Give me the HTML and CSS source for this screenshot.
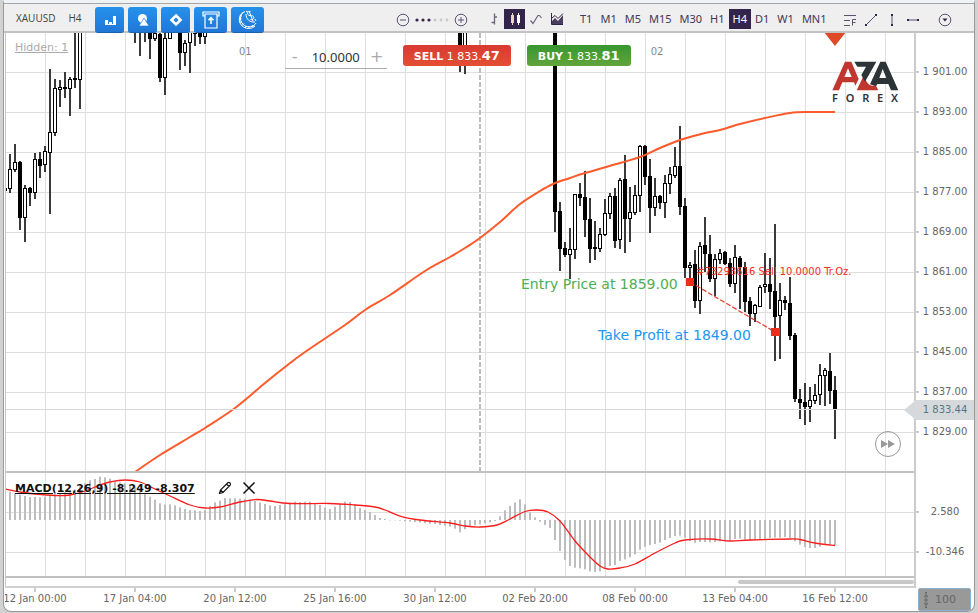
FILE: index.html
```html
<!DOCTYPE html>
<html lang="en">
<head>
<meta charset="utf-8">
<title>XAUUSD H4</title>
<link rel="stylesheet" href="styles.css">
</head>
<body>
<div class="terminal">
  <header class="toolbar">
    <div class="symbol"><span>XAUUSD</span><span>H4</span></div>
    <nav class="tools">
      <button class="tool" aria-label="Indicators"><svg width="12" height="12" viewBox="0 0 12 12"><path fill="#fff" d="M1 6h3v5H1zM5 8h3v3H5zM9 2h3v9H9zM1 10h11v1H1z"/></svg></button>
      <button class="tool" aria-label="Objects"><svg width="14" height="14" viewBox="0 0 14 14"><circle cx="6.500" cy="5.500" r="4.500" fill="#fff"/><path d="M8 5 13 13H3z" fill="#fff" stroke="#2482dd" stroke-width=".7"/></svg></button>
      <button class="tool" aria-label="Shapes"><svg width="14" height="14" viewBox="0 0 14 14"><path d="M7 2.500 11.500 7 7 11.500 2.500 7z" fill="none" stroke="#fff" stroke-width="2.600"/></svg></button>
      <button class="tool wide" aria-label="Deposit"><svg width="18" height="18" viewBox="0 0 18 18" fill="none" stroke="#fff" stroke-width="1.200"><path d="M3 5H1V1h16v4h-2M3 3h12v14H3z"/><path stroke-width="1.600" d="M9 13V7M6.500 9.200 9 6.700l2.500 2.500"/></svg></button>
      <button class="tool wide" aria-label="Funds"><svg width="20" height="20" viewBox="0 0 20 20" fill="none" stroke="#fff"><path d="M7 1.500C1 4 1 12 6.500 15.500c4 2.500 9.500 1.500 11.500-2.500"/><path d="M5 2.500C-.5 6 .5 14 5.500 17c4 2.500 9 1.500 11.500-1M2 5.500l2 .7M1 9l2.500-.2M1.500 12.500l2.500-1M4 15.500l2-2M7 18l1-2M11 18.500V16M15 17l-.8-2"/><path d="M8 4c0 5 3.500 8.500 9 8M12.500 1.500c-3-.5-4 2-2 3.500s4 0 5 1.500-.5 4-3 3M11 1l4 10M8 1.500l2 .5M17 9l1 2"/></svg></button>
    </nav>
    <div class="zoomer">
      <button class="icon" aria-label="Zoom out"><svg width="14" height="14" viewBox="0 0 14 14" fill="none" stroke="#5d5270"><circle cx="7" cy="7" r="5.800"/><path d="M4 7h6"/></svg></button>
      <svg class="dots" width="34" height="4" viewBox="0 0 34 4"><g fill="#32244a"><circle cx="2" cy="2" r="1.600"/><circle cx="8" cy="2" r="1.600"/><circle cx="14" cy="2" r="1.600"/></g><g fill="#c8c8cc"><circle cx="20" cy="2" r="1.400"/><circle cx="26" cy="2" r="1.400"/><circle cx="32" cy="2" r="1.400"/></g></svg>
      <button class="icon" aria-label="Zoom in"><svg width="14" height="14" viewBox="0 0 14 14" fill="none" stroke="#5d5270"><circle cx="7" cy="7" r="5.800"/><path d="M4 7h6M7 4v6"/></svg></button>
    </div>
    <div class="styles">
      <button class="style" aria-label="Bars"><svg width="12" height="14" viewBox="0 0 12 14" fill="none" stroke="#6d637d" stroke-width="1.300"><path d="M6.500 1.500v11M3.500 10.500h3M6.500 5H9"/></svg></button>
      <button class="style active" aria-label="Candles"><svg width="12" height="14" viewBox="0 0 12 14" fill="#fff"><path fill="#e9d3c4" d="M2 3h3v8H2zM3 1h1v12H3z"/><path d="M8 3h3v8H8zM9 1h1v12H9z"/></svg></button>
      <button class="style" aria-label="Line"><svg width="12" height="12" viewBox="0 0 12 12" fill="none" stroke="#6d637d" stroke-width="1.200"><path d="M.5 7.500 3 10.500 8 2.500h1.500L11.500 5"/></svg></button>
      <button class="style" aria-label="Area"><svg width="14" height="14" viewBox="0 0 14 14"><path d="M1.500 1v11.500H13" fill="none" stroke="#32244a"/><path d="M2 12V9l3-3 3 3 5-6v9z" fill="#4a3f60"/><path d="m2 6 3-2.500 3 3L13 1.500" fill="none" stroke="#32244a"/></svg></button>
    </div>
    <div class="periods">
      <button>T1</button><button>M1</button><button>M5</button><button>M15</button><button>M30</button><button>H1</button><button class="active">H4</button><button>D1</button><button>W1</button><button>MN1</button>
    </div>
    <div class="drawing">
      <button class="icon" aria-label="Fibonacci"><svg width="14" height="14" viewBox="0 0 14 14" fill="none" stroke="#5d5270"><path d="M1 2.500h12M1 7.500h6M1 12.500h6M9.500 12.500v-6H13M9.500 9.500h3"/></svg></button>
      <button class="icon" aria-label="Trend line"><svg width="14" height="14" viewBox="0 0 14 14"><path d="m2 12 10-10" stroke="#5d5270"/><path fill="#32244a" d="M1 11h2v2H1zM11 1h2v2h-2z"/></svg></button>
      <button class="icon" aria-label="Vertical line"><svg width="14" height="14" viewBox="0 0 14 14"><path d="M7 2v10" stroke="#5d5270"/><path fill="#32244a" d="M6 1h2v2H6zM6 11h2v2H6z"/></svg></button>
      <button class="icon" aria-label="Horizontal line"><svg width="14" height="14" viewBox="0 0 14 14"><path d="M2 7h10" stroke="#5d5270"/><path fill="#32244a" d="M1 6h2v2H1zM11 6h2v2h-2z"/></svg></button>
    </div>
    <button class="icon more" aria-label="More"><svg width="14" height="14" viewBox="0 0 14 14"><circle cx="7" cy="7" r="5.800" fill="none" stroke="#5d5270"/><path d="M4.500 5.500h5L7 8.500z" fill="#32244a"/></svg></button>
  </header>

  <main class="workspace">
    <div class="panes">
      <section class="price-pane">
        <svg class="plot" id="price" role="img" aria-label="XAUUSD price chart"></svg>
        <a class="hidden-link" href="#">Hidden: 1</a>
        <div class="trade">
          <span class="day">01</span>
          <div class="lot">
            <button aria-label="Less">-</button>
            <input aria-label="Volume" value="10.0000">
            <button aria-label="More volume">+</button>
          </div>
          <button class="order sell"><b>SELL</b> 1 833.<strong>47</strong></button>
          <button class="order buy"><b>BUY</b> 1 833.<strong>81</strong></button>
          <span class="day">02</span>
        </div>
        <div class="brand">
          <svg width="68" height="30" viewBox="0 0 204 90">
            <g fill="#c0372f"><path fill-rule="evenodd" d="M1 88 39 2H58L80 54 70 74 66 64H31L21 88zM37 48H59L48 22z"/><path d="M94 46 104 62Q112 74 122 74H132L139 88H74z"/></g>
            <g fill="#2d3437"><path d="M67 2H133L99 62 88 42 102 17H76z"/><path fill-rule="evenodd" d="M114 70 145 2H161L199 88H177L169 69H136L132 76zM142 51H163L152 24z"/></g>
          </svg>
          <div class="brand-name"><span>F</span><span>O</span><span>R</span><span>E</span><span>X</span></div>
        </div>
        <button class="forward" aria-label="Go to latest"><svg width="14" height="8" viewBox="0 0 14 8"><path fill="#999" d="M0 0 7 4 0 8zM7 0l7 4-7 4z"/></svg></button>
      </section>
      <section class="macd-pane">
        <svg class="plot" id="macd" role="img" aria-label="MACD indicator"></svg>
        <div class="macd-head">
          <a href="#">MACD(12,26,9) -8.249 -8.307</a>
          <button class="icon" aria-label="Edit"><svg width="14" height="14" viewBox="0 0 14 14" fill="#fff" stroke="#111" stroke-width="1.200"><path d="M1.500 12.500 2.500 9 9.800 1.800Q11 1 12 2t.2 2.200L5 11.500zM8.500 3 11 5.500M2.500 9 5 11.500"/></svg></button>
          <button class="icon" aria-label="Remove"><svg width="14" height="14" viewBox="0 0 14 14" stroke="#111" stroke-width="1.500"><path d="m1.500 1.500 11 11M12.500 1.500l-11 11"/></svg></button>
        </div>
      </section>
      <div class="scroll"><div class="thumb"></div></div>
    </div>

    <aside class="price-axis">
      <ol class="price-labels">
        <li>1 901.00</li><li>1 893.00</li><li>1 885.00</li><li>1 877.00</li><li>1 869.00</li><li>1 861.00</li><li>1 853.00</li><li>1 845.00</li><li>1 837.00</li><li>1 829.00</li>
      </ol>
      <div class="current">1 833.44</div>
      <ol class="macd-labels"><li>2.580</li><li>-10.346</li></ol>
    </aside>

    <ol class="time-axis">
      <li>12 Jan 00:00</li><li>17 Jan 04:00</li><li>20 Jan 12:00</li><li>25 Jan 16:00</li><li>30 Jan 12:00</li><li>02 Feb 20:00</li><li>08 Feb 00:00</li><li>13 Feb 04:00</li><li>16 Feb 12:00</li>
    </ol>
    <button class="scale"><svg width="8" height="16" viewBox="0 0 8 16" fill="none" stroke="#666"><path d="M4 3v10M2 5l2-2.500L6 5M2 11l2 2.500L6 11M2 8h4"/><path d="M4 0v1.500M4 14.500V16" stroke-width="2"/></svg>100</button>
  </main>
</div>
<script src="chart.js"></script>
</body>
</html>
```
FILE: styles.css
```css
* { box-sizing: border-box; }

body {
  margin: 0;
  height: 100vh;
  display: flex;
  background: #d2d2d2;
  font-family: "DejaVu Sans", Verdana, sans-serif;
  font-size: 10px;
  color: #666;
}

button {
  margin: 0;
  padding: 0;
  border: 0;
  background: none;
  font: inherit;
  color: inherit;
}

svg { display: block; flex: none; }
ol { margin: 0; padding: 0; list-style: none; }

.terminal {
  flex: 1;
  display: flex;
  flex-direction: column;
  min-height: 560px;
  margin: 0 3px 1px;
  border: 1px solid #999;
  border-top: 3px solid #eff3f6;
  border-radius: 0 0 8px 8px;
  background: #fff;
  overflow: hidden;
}

/* Toolbar */
.toolbar {
  flex: none;
  display: flex;
  align-items: center;
  height: 30px;
  padding: 0 22px 0 12px;
  border-top: 1px solid #a4a8ac;
  border-bottom: 2px solid #c3c3c3;
  background: #efefef;
  font-family: "Noto Sans", sans-serif;
}

.symbol {
  display: flex;
  gap: 13px;
  width: 79px;
  font-family: "Open Sans", sans-serif;
  color: #444;
}

.tools { display: flex; gap: 4px; align-self: flex-start; padding-top: 3px; }

.tool {
  display: flex;
  align-items: center;
  justify-content: center;
  width: 29px;
  height: 26px;
  border-bottom: 1px solid #1c62b0;
  border-radius: 3px;
  background: linear-gradient(#2592ec, #2077d6);
}
.tool.wide { width: 33px; }

.icon { display: flex; }

.zoomer { display: flex; align-items: center; gap: 5px; margin-left: 132px; padding-top: 4px; }
.styles { display: flex; margin-left: 15px; padding-top: 2px; }

.style {
  display: flex;
  align-items: center;
  justify-content: center;
  width: 21px;
  height: 20px;
}
.active { background: #32244a; color: #fff; }

.periods { display: flex; margin-left: 9px; padding-top: 2px; font-size: 11px; color: #43385a; }
.periods button { height: 20px; padding: 0 4px; }
.periods .active { color: #fff; }

.drawing { display: flex; gap: 7px; margin-left: auto; padding-top: 4px; }
.more { margin-left: 18px; padding-top: 4px; }

/* Chart area */
.workspace {
  flex: 1;
  display: grid;
  grid-template-columns: minmax(0, 1fr) 60px;
  grid-template-rows: minmax(0, 1fr) 23px;
  margin-left: 1px;
}

.panes {
  display: flex;
  flex-direction: column;
  border-left: 1px solid #c8c8c8;
  border-bottom: 2px solid #d0d0d0;
}

.price-pane { position: relative; flex: 1; overflow: hidden; }
.macd-pane {
  position: relative;
  flex: none;
  height: 107px;
  border-top: 2px solid #c0c0c0;
  border-bottom: 2px solid #c0c0c0;
}
.plot { position: absolute; width: 100%; height: 100%; }

.hidden-link {
  position: absolute;
  top: 8px;
  left: 9px;
  font-size: 11px;
  color: #aaa;
}

.trade {
  position: absolute;
  top: 12px;
  left: 233px;
  display: flex;
  align-items: flex-start;
}
.day { line-height: 14px; color: #888; }

.lot {
  display: flex;
  align-items: center;
  width: 102px;
  height: 24px;
  margin: 0 16px 0 33px;
  border-bottom: 1px solid #aaa;
  font-size: 16px;
  color: #aaa;
}
.lot button { width: 20px; line-height: 20px; }
.lot input {
  flex: 1;
  min-width: 0;
  height: 20px;
  padding: 0;
  border: 0;
  background: none;
  font: 13px "Noto Sans", sans-serif;
  text-align: center;
  color: #333;
}

.order {
  height: 21px;
  padding: 0 11px;
  border-radius: 3px;
  font-size: 11px;
  line-height: 21px;
  white-space: nowrap;
  color: #fff;
}
.order strong { font-size: 13px; }
.sell { margin-right: 16px; background: linear-gradient(#d83a31, #e34f33); }
.buy { margin-right: 20px; background: linear-gradient(#37962f, #61a53b); }

.brand {
  position: absolute;
  top: 28px;
  left: 826px;
  width: 68px;
}
.brand-name {
  display: flex;
  justify-content: space-between;
  padding-right: 2px;
  font: 600 11px/14px "Noto Sans", sans-serif;
  color: #2d3437;
}

.forward {
  position: absolute;
  right: 13px;
  bottom: 14px;
  display: flex;
  align-items: center;
  justify-content: center;
  width: 26px;
  height: 26px;
  border: 1px solid #999;
  border-radius: 50%;
}

.macd-head {
  position: absolute;
  top: 8px;
  left: 9px;
  display: flex;
  align-items: center;
}
.macd-head a { font-size: 11px; font-weight: bold; color: #111; }
.macd-head .icon { margin-left: 23px; }
.macd-head .icon + .icon { margin-left: 10px; }

.scroll { flex: none; height: 8px; padding: 2px 0; }
.thumb { width: 176px; height: 4px; margin-left: auto; border-radius: 2px; background: #c8c8c8; }

/* Axes */
.price-axis {
  position: relative;
  display: flex;
  flex-direction: column;
  border-left: 2px solid #ccc;
  text-align: center;
}
.price-labels { flex: 1; padding-top: 19px; }
.price-labels li, .macd-labels li {
  height: 40px;
  line-height: 40px;
  background: linear-gradient(#ccc, #ccc) 0 50% / 3px 2px no-repeat;
}
.macd-labels { height: 96px; }

.current {
  position: absolute;
  top: 367px;
  right: 0;
  left: -12px;
  padding-left: 12px;
  line-height: 20px;
  color: #557785;
  background: #d5d9dc;
  clip-path: polygon(0 50%, 12px 0, 100% 0, 100% 100%, 12px 100%);
}

.time-axis { display: flex; margin-left: -20px; overflow: hidden; clip-path: inset(0 0 0 20px); }
.time-axis li {
  flex: none;
  width: 100px;
  line-height: 22px;
  text-align: center;
  background: linear-gradient(#ccc, #ccc) 50% 0 / 2px 4px no-repeat;
}

.scale {
  display: flex;
  align-items: center;
  gap: 5px;
  height: 23px;
  margin: 0 3px 0 4px;
  padding-left: 3px;
  border: 1px solid #8fb0cc;
  border-radius: 2px;
  background: #999;
  font-size: 11px;
}
```
FILE: chart.js
```js
const NS = "http://www.w3.org/2000/svg";

// Both panes share the terminal's coordinate space; each one shifts it to its own origin.
function openPane(id, dx, dy) {
  const svg = document.getElementById(id);
  const group = document.createElementNS(NS, "g");
  group.setAttribute("transform", `translate(${dx} ${dy})`);
  svg.appendChild(group);
  return group;
}

function add(parent, tag, attrs, text) {
  const el = document.createElementNS(NS, tag);
  for (const key in attrs) el.setAttribute(key, attrs[key]);
  if (text) el.textContent = text;
  parent.appendChild(el);
  return el;
}

const rect = (g, x, y, width, height, fill) => add(g, "rect", { x, y, width, height, fill });

function curve(g, pts, stroke, width) {
  let d = `M${pts[0]}`;
  for (let i = 0; i < pts.length - 1; i++) {
    const p0 = pts[i - 1] || pts[i], p1 = pts[i], p2 = pts[i + 1], p3 = pts[i + 2] || p2;
    d += `C${p1[0] + (p2[0] - p0[0]) / 6},${p1[1] + (p2[1] - p0[1]) / 6} ${p2[0] - (p3[0] - p1[0]) / 6},${p2[1] - (p3[1] - p1[1]) / 6} ${p2}`;
  }
  add(g, "path", { d, fill: "none", stroke, "stroke-width": width });
}

function grid(g, top, bottom, first) {
  for (let x = 45; x < 3000; x += 40) rect(g, x, top, 1, bottom - top, "#dfdfdf");
  for (let y = first; y < bottom; y += 40) rect(g, 0, y, 3000, 1, "#dfdfdf");
}

// x, high, low, body top, body bottom, rising (1) or falling (0)
const candles = [
  [5,185,218,188,191,1],[10,154,193,169,189,1],[15,144,172,162,170,1],[20,161,230,162,218,0],
  [25,185,242,188,218,1],[30,187,206,188,193,0],[35,153,199,159,193,1],[40,152,178,159,166,0],
  [45,146,172,151,165,1],[50,69,214,132,153,1],[55,79,136,88,133,1],[60,80,107,87,90,1],
  [65,72,98,87,89,0],[70,77,116,79,89,1],[75,20,88,78,80,0],[80,20,109,20,80,1],
  [135,20,43,20,22,0],[140,20,56,20,22,0],[145,20,42,20,22,0],[150,20,59,20,39,0],
  [155,20,41,33,39,1],[160,20,82,34,78,0],[165,20,95,38,78,1],[170,20,39,20,39,1],
  [180,20,70,20,53,0],[185,40,66,43,53,1],[190,20,73,20,43,1],[195,20,46,20,34,0],
  [200,20,44,20,37,0],[205,20,44,20,37,1],[460,20,72,20,65,0],[465,20,74,20,65,1],
  [555,20,232,20,212,0],[560,202,271,211,249,0],[565,242,257,248,255,0],[570,228,279,249,255,1],
  [575,194,259,194,250,1],[580,183,206,194,198,0],[585,171,237,197,220,0],[590,198,263,219,249,0],
  [595,221,260,247,249,0],[600,228,252,234,249,1],[605,199,236,213,235,1],[610,193,219,196,214,1],
  [615,188,248,196,241,0],[620,178,249,180,240,1],[625,155,253,179,219,0],[630,187,242,212,219,1],
  [635,185,215,195,213,1],[640,145,212,146,196,1],[645,145,185,146,177,0],[650,159,233,176,208,0],
  [655,178,216,196,208,1],[660,195,209,196,203,0],[665,175,218,183,203,1],[670,167,194,174,184,1],
  [675,147,178,166,176,1],[680,126,215,166,207,0],[685,198,278,206,268,0],[690,262,278,265,268,1],
  [695,250,308,264,301,0],[700,242,314,246,301,1],[705,217,272,245,254,0],[710,235,282,254,279,0],
  [715,254,296,259,279,1],[720,249,264,253,260,1],[725,251,265,252,264,0],[730,258,287,263,284,0],
  [735,245,293,257,284,1],[740,256,309,258,267,0],[745,262,312,267,302,0],[750,297,326,301,314,0],
  [755,304,322,305,314,1],[760,285,307,287,307,1],[765,253,293,284,287,1],[770,258,309,284,292,0],
  [775,224,361,291,317,0],[780,283,359,300,316,1],[785,296,310,300,303,0],[790,277,340,303,336,0],
  [795,333,402,335,399,0],[800,389,419,399,403,0],[805,383,425,402,407,0],[810,387,422,400,407,1],
  [815,384,404,395,401,1],[820,364,405,375,395,1],[825,368,406,370,376,1],[830,353,404,371,391,0],
  [835,376,439,390,410,0]
];

const average = [[135,472],[160,455],[190,437],[205,428],[235,408],[265,383],[285,367],[305,352],
  [345,325],[365,310],[390,295],[425,271],[450,257],[465,248],[480,238],[500,222],[520,204],
  [540,191],[553,184],[570,178],[585,173],[620,163],[640,157],[660,148],[680,140],[705,133],
  [720,130],[740,124],[765,118],[790,113],[810,112],[835,112]];

const price = openPane("price", -6, -33);
grid(price, 0, 2000, 72);
add(price, "path", { d: "M480 33V2000", stroke: "#bdbdbd", "stroke-width": 2, "stroke-dasharray": "5 2" });
for (const [x, high, low, top, bottom, up] of candles) {
  rect(price, x - 1, high, 2, low - high, "#3a3a3a");
  rect(price, x - 2, top, 4, bottom - top, "#000");
  if (up) rect(price, x - 1, top + 1, 2, bottom - top - 2, "#fff");
}
curve(price, average, "#ff5a2b", 2);
rect(price, 0, 409, 3000, 1, "#d5d9dc");
add(price, "path", { d: "M824 32h22l-11 14z", fill: "#de4a28" });
add(price, "path", { d: "M690 282 775 332", stroke: "#e83a28", "stroke-width": 1.2, "stroke-dasharray": "5 2" });
rect(price, 686, 278, 8, 8, "#ee2a18");
rect(price, 771, 328, 9, 8, "#ee2a18");
add(price, "text", { x: 696, y: 275, "font-size": 10, fill: "#f03020" }, "#73298616 Sell 10.0000 Tr.Oz.");
add(price, "text", { x: 521, y: 289, "font-size": 14, fill: "#4caf50" }, "Entry Price at 1859.00");
add(price, "text", { x: 598, y: 340, "font-size": 14, fill: "#2196f3" }, "Take Profit at 1849.00");

// One histogram bar every 5px, as distance above the zero line in thirds of a pixel
const histogram = [85,80,76,72,69,69,68,70,73,77,80,83,87,92,100,110,119,123,130,128,124,118,113,110,
  105,98,90,79,70,61,50,46,47,44,38,33,30,29,27,30,42,53,58,66,65,65,64,63,61,57,52,48,44,42,45,48,
  52,55,54,55,55,51,45,37,33,40,48,55,54,47,36,30,24,15,6,3,-1,-1,-2,-4,-5,-6,-7,-9,-11,-12,-15,-17,
  -20,-26,-37,-28,-20,-16,-13,-10,-7,-3,11,29,42,53,62,47,23,8,-5,-15,-24,-60,-93,-120,-138,-143,
  -145,-148,-154,-156,-154,-144,-138,-135,-123,-118,-112,-103,-89,-80,-75,-72,-68,-60,-54,-48,-47,
  -53,-63,-68,-66,-66,-67,-66,-64,-62,-61,-57,-56,-58,-61,-60,-59,-56,-54,-53,-53,-51,-54,-64,-74,
  -81,-84,-84,-80,-75,-75,-76];

const signal = [[5,489],[20,492],[35,494],[55,495.5],[70,495],[85,491],[100,485],[110,482],[125,480],
  [140,482],[155,489],[170,496],[190,505],[205,508],[220,507],[240,502],[257,499.5],[270,501],
  [290,503.5],[330,503.5],[355,505],[375,507],[385,510],[400,516],[420,520],[450,523],[465,526],
  [480,527],[497,525],[510,519],[525,511.5],[537,510],[548,512],[560,521],[575,541],[590,557],
  [600,566],[608,569],[620,568],[635,564],[655,553],[675,543],[685,540],[710,539],[730,541],
  [750,540],[790,539],[800,539.5],[815,543],[835,545.5]];

const macd = openPane("macd", -6, -473);
grid(macd, 460, 600, 512);
histogram.forEach((v, i) => {
  const h = Math.abs(v) / 3;
  rect(macd, 9 + i * 5, v > 0 ? 520 - h : 520, 2, h, "#bdbdbd");
});
curve(macd, signal, "#fb1c1c", 1.3);
```
